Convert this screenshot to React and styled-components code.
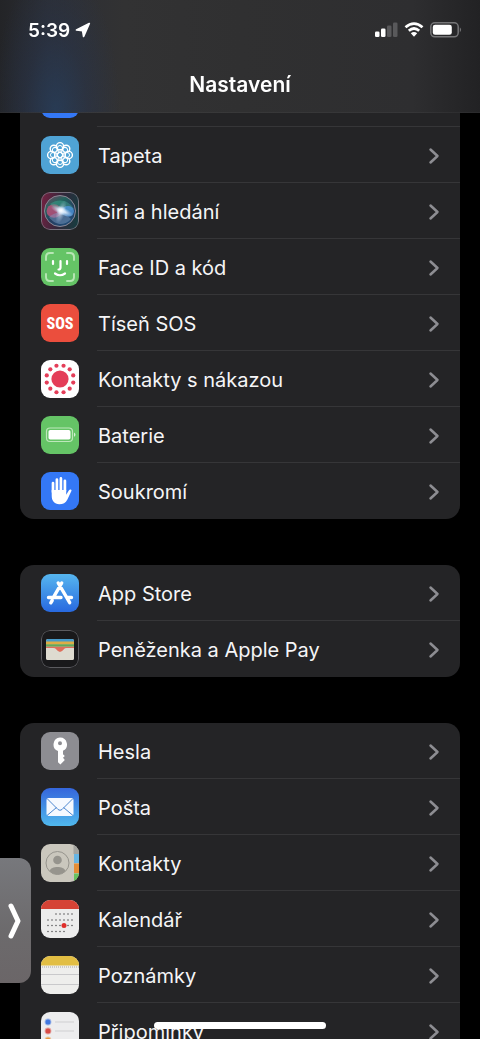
import styled, { createGlobalStyle } from "styled-components";

const GlobalStyle = createGlobalStyle`
  * {
    box-sizing: border-box;
  }
  body {
    margin: 0;
    background-color: #000;
    color: #f5f5f7;
    font-family: Inter, "Liberation Sans", sans-serif;
  }
`;

const Screen = styled.div`
  height: 100vh;
  overflow: hidden auto;
  scrollbar-width: none;
`;

const Header = styled.header`
  position: fixed;
  inset: 0 0 auto 0;
  z-index: 2;
  height: 113px;
  border-bottom: 1px solid rgba(255, 255, 255, 0.04);
  background: radial-gradient(
      ellipse 64px 150px at 56px 113px,
      rgba(38, 64, 98, 0.7),
      rgba(39, 54, 82, 0.4) 50%,
      transparent
    ),
    linear-gradient(
      to right,
      #232427,
      #2c2e34 10%,
      #323233 26%,
      #303031 50%,
      #2e2e30 86%,
      #222224
    );
`;

const StatusBar = styled.div`
  display: flex;
  align-items: center;
  justify-content: space-between;
  height: 60px;
  padding: 0 18px 0 28px;
  svg {
    display: block;
  }
`;

const Clock = styled.div`
  display: flex;
  align-items: center;
  gap: 5px;
  font-size: 19px;
  font-weight: 600;
  color: #fff;
`;

const Indicators = styled.div`
  display: flex;
  align-items: center;
  gap: 6px;
`;

const Title = styled.h1`
  margin: 0;
  height: 50px;
  line-height: 50px;
  text-align: center;
  font-size: 21px;
  font-weight: 600;
  color: #fff;
`;

const Groups = styled.main`
  display: flex;
  flex-direction: column;
  gap: 46px;
  padding: 71px 20px 0;
`;

const Group = styled.ul`
  margin: 0;
  padding: 0;
  list-style: none;
  border-radius: 14px;
  background-color: #242426;
  overflow: hidden;
`;

const Row = styled.a`
  display: flex;
  align-items: center;
  gap: 18px;
  height: 56px;
  padding-left: 21px;
  color: inherit;
  text-decoration: none;
`;

const AppIcon = styled.svg`
  flex: none;
  display: block;
  width: 38px;
  height: 38px;
  border-radius: 9px;
  background: ${({ $bg }) => $bg};
`;

const RowBody = styled.span`
  flex: 1;
  display: flex;
  align-items: center;
  justify-content: space-between;
  height: 56px;
  padding: 2px 20px 0 1px;
  border-bottom: 1px solid #363638;
  font-size: 20px;
  li:last-child & {
    border-color: transparent;
  }
`;

const Handle = styled.button`
  position: fixed;
  left: 0;
  top: 858px;
  z-index: 3;
  display: flex;
  align-items: center;
  justify-content: flex-end;
  width: 31px;
  height: 125px;
  padding: 0 8px 0 0;
  border: 0;
  border-radius: 0 12px 12px 0;
  background: linear-gradient(#77787c, #6c6a6c 60%, #6b6668);
`;

const HomeIndicator = styled.div`
  position: fixed;
  left: 50%;
  bottom: 10px;
  z-index: 3;
  width: 172px;
  height: 7px;
  transform: translateX(-50%);
  border-radius: 4px;
  background-color: #fff;
`;

const ring = (count, radius, start = 0) =>
  Array.from({ length: count }, (_, i) => {
    const angle = ((start + (360 / count) * i) * Math.PI) / 180;
    return [19 + radius * Math.cos(angle), 19 + radius * Math.sin(angle)];
  });

const icons = {
  display: { bg: "#3478f6", art: null },
  wallpaper: {
    bg: "#4fa3d5",
    art: (
      <g fill="none" stroke="#fff">
        {ring(8, 8.8).map(([x, y]) => (
          <circle key={`${x}-${y}`} cx={x} cy={y} r="3.6" strokeWidth="1.4" />
        ))}
        {[0, 45, 90, 135, 180, 225, 270, 315].map((a) => (
          <ellipse
            key={a}
            cx="19"
            cy="13"
            rx="2.7"
            ry="3.6"
            strokeWidth="1"
            transform={`rotate(${a} 19 19)`}
          />
        ))}
        <circle cx="19" cy="19" r="2.6" strokeWidth="1.2" />
      </g>
    ),
  },
  siri: {
    bg: "linear-gradient(100deg, #792142, #32273a 50%, #143f41)",
    art: (
      <>
        <defs>
          <radialGradient id="siriGlow">
            <stop offset="0" stopColor="#fff" />
            <stop offset="0.3" stopColor="#eef5ff" stopOpacity="0.85" />
            <stop offset="1" stopColor="#b9d8f2" stopOpacity="0" />
          </radialGradient>
          <linearGradient id="siriOrb" x1="0" y1="0" x2="0.6" y2="1">
            <stop offset="0" stopColor="#814264" />
            <stop offset="0.35" stopColor="#24635d" />
            <stop offset="0.7" stopColor="#253d60" />
            <stop offset="1" stopColor="#224b74" />
          </linearGradient>
        </defs>
        <circle cx="19" cy="19" r="15.5" fill="url(#siriOrb)" stroke="#8c8794" />
        <ellipse cx="13" cy="19" rx="7.5" ry="6.8" fill="#d6507f" opacity=".7" />
        <path d="M9 12C18 5 29 9 33 17C26 21 17 20 9 12Z" fill="#46b39a" opacity=".4" />
        <path d="M18 19C24 12 32 13 33 19C32 27 24 26 18 19Z" fill="#4f98e0" opacity=".75" />
        <path d="M8 25C14 20 21 18 30 27C24 34 14 34 8 25Z" fill="#7f9fc8" opacity=".45" />
        <ellipse cx="21" cy="19" rx="12" ry="4" fill="url(#siriGlow)" transform="rotate(22 21 19)" />
        <ellipse cx="20" cy="20" rx="4.5" ry="12" fill="url(#siriGlow)" opacity=".55" transform="rotate(18 20 20)" />
        <circle cx="20" cy="18.5" r="5" fill="url(#siriGlow)" />
        <rect x=".5" y=".5" width="37" height="37" rx="8.5" fill="none" stroke="#77717d" />
      </>
    ),
  },
  face: {
    bg: "#65c466",
    art: (
      <g fill="none" strokeLinecap="round" stroke="#fff" strokeWidth="2.2">
        <g stroke="#b8e6b5" strokeWidth="1.9">
          <path d="M5 12V9Q5 5 9 5H12M26 5h3q4 0 4 4v3M33 26v3q0 4-4 4h-3M12 33H9q-4 0-4-4v-3" />
        </g>
        <path d="M12 13v3M26 13v3M19.5 13v6.5q0 2-2 2M14 25.5q5 3.5 10 0" />
      </g>
    ),
  },
  sos: {
    bg: "#eb4e3d",
    art: (
      <text
        x="19"
        y="25"
        textAnchor="middle"
        fill="#fff"
        fontFamily="'Roboto Condensed', 'Open Sans Condensed', Roboto, sans-serif"
        fontSize="16"
        fontWeight="800"
      >
        SOS
      </text>
    ),
  },
  exposure: {
    bg: "#fff",
    art: (
      <g fill="#e43d58">
        <circle cx="19" cy="19" r="8.6" />
        {ring(12, 13.7, 15).map(([x, y]) => (
          <circle key={`${x}-${y}`} cx={x} cy={y} r="2.1" />
        ))}
      </g>
    ),
  },
  battery: {
    bg: "#65c466",
    art: (
      <>
        <rect x="5.5" y="12" width="26" height="13.5" rx="3.5" fill="none" stroke="#bee7bb" strokeWidth="1.2" />
        <rect x="7.5" y="14" width="22" height="9.5" rx="1.8" fill="#fff" />
        <path d="M33 16.5q3 2.2 0 4.5z" fill="#d6f0d4" />
      </>
    ),
  },
  privacy: {
    bg: "#3478f6",
    art: (
      <>
        <path
          d="M12 20V11M15.9 18V7.5M19.9 18V6.4M23.9 19V8.8"
          stroke="#fff"
          strokeWidth="2.7"
          strokeLinecap="round"
        />
        <path
          d="M10.7 18H25.2v4.8l2.6-4.4c1-1.5 3.3-1.1 2.6.7l-4 8.4C24.7 31 22 32.2 18.3 32.2c-5 0-7.6-3.3-7.6-8.7z"
          fill="#fff"
        />
      </>
    ),
  },
  store: {
    bg: "linear-gradient(#56b6ef, #2869df)",
    art: (
      <g stroke="#fff" strokeWidth="3.4" strokeLinecap="round">
        <path d="M20.7 9L13 22.3M17.2 9L28.7 28.7M7.5 23.5H20M27 23.5H30.5M11.2 26.5L9.8 28.8" />
      </g>
    ),
  },
  wallet: {
    bg: "#19191b",
    art: (
      <>
        <rect x="5" y="9" width="28" height="21" rx="2" fill="#dedbd0" />
        <path d="M5 12v-1q0-2 2-2h24q2 0 2 2v1z" fill="#479bc9" />
        <path d="M5 11.5h28v3H5z" fill="#dfad45" />
        <path d="M5 14.2h28v2.6H5z" fill="#65a857" />
        <path d="M5 16.7h28v1.6h-8q-2 0-3 2-3 3.5-6 0-1-2-3-2H5z" fill="#df6e5b" />
        <path d="M5 18h7q2 0 3 1.8 4 4.5 8 0 1-1.8 3-1.8h7v10q0 2-2 2H7q-2 0-2-2z" fill="#dedbd0" />
        <rect x=".5" y=".5" width="37" height="37" rx="8.5" fill="none" stroke="#5b5b5f" />
      </>
    ),
  },
  key: {
    bg: "#8d8d92",
    art: (
      <path
        fill="#fff"
        fillRule="evenodd"
        d="M19 5.5a7 7 0 0 1 3 13.3v3.4l1.8 1.7-1.8 1.8 1.8 2.3-4.4 4.5-2.4-2.3V19A7 7 0 0 1 19 5.5zm0 3.7a2 2 0 1 0 0 4 2 2 0 0 0 0-4z"
      />
    ),
  },
  mail: {
    bg: "linear-gradient(#3566dc, #50b8ec)",
    art: (
      <>
        <rect x="5.5" y="10" width="27" height="18" rx="2" fill="#f5f9ff" />
        <path
          d="M6 10.5l11 11q2 1.7 4 0l11-11M6 27.5l9.5-8M32 27.5l-9.5-8"
          fill="none"
          stroke="#4c87cf"
          strokeWidth="1"
        />
      </>
    ),
  },
  contacts: {
    bg: "#cac7bd",
    art: (
      <>
        <path d="M32.5 0H38V10H32.5z" fill="#a4a49f" />
        <path d="M33 10h5v9h-5z" fill="#66b5e4" />
        <path d="M33 19.5h5V29h-5z" fill="#e58d35" />
        <path d="M33 29.5h5V38h-5z" fill="#67c35f" />
        <circle cx="16.5" cy="19" r="11.5" fill="none" stroke="#96948d" />
        <circle cx="16.5" cy="16" r="4.3" fill="#96948d" />
        <path d="M8.5 27c1.5-5.5 14.5-5.5 16 0-4 4.5-12 4.5-16 0z" fill="#96948d" />
      </>
    ),
  },
  calendar: {
    bg: "#ececec",
    art: (
      <>
        <path d="M0 0h38v9H0z" fill="#d54336" />
        <g stroke="#4d4d4f" strokeWidth="1.5" strokeLinecap="round" strokeDasharray="0 4">
          <path d="M15 14H31.5M7 20H31.5M7 25.5H31.5M7 31.5H23.5" />
        </g>
        <circle cx="23" cy="25.5" r="2.5" fill="#df2e2b" />
      </>
    ),
  },
  notes: {
    bg: "#eeeeec",
    art: (
      <>
        <path d="M0 0h38v9.5H0z" fill="#e2be43" />
        <path d="M1 11H38" stroke="#aaa89f" strokeDasharray="1 1" />
        <path d="M0 18.5H38M0 28.5H38" stroke="#c9c9cb" />
      </>
    ),
  },
  reminders: {
    bg: "#ededee",
    art: (
      <>
        {[
          ["#4277df", 10],
          ["#d94b45", 19],
          ["#e9973f", 28],
        ].map(([color, y]) => (
          <g key={y}>
            <circle cx="7" cy={y} r="2.5" fill={color} stroke={color} strokeOpacity=".45" strokeWidth="1.8" />
            <path d={`M14 ${y}H33`} stroke="#cfcfd1" />
          </g>
        ))}
      </>
    ),
  },
};

const groups = [
  [
    { id: "zobrazeni", icon: "display", title: "" },
    { id: "tapeta", icon: "wallpaper", title: "Tapeta" },
    { id: "siri", icon: "siri", title: "Siri a hledání" },
    { id: "face-id", icon: "face", title: "Face ID a kód" },
    { id: "sos", icon: "sos", title: "Tíseň SOS" },
    { id: "nakaza", icon: "exposure", title: "Kontakty s nákazou" },
    { id: "baterie", icon: "battery", title: "Baterie" },
    { id: "soukromi", icon: "privacy", title: "Soukromí" },
  ],
  [
    { id: "app-store", icon: "store", title: "App Store" },
    { id: "penezenka", icon: "wallet", title: "Peněženka a Apple Pay" },
  ],
  [
    { id: "hesla", icon: "key", title: "Hesla" },
    { id: "posta", icon: "mail", title: "Pošta" },
    { id: "kontakty", icon: "contacts", title: "Kontakty" },
    { id: "kalendar", icon: "calendar", title: "Kalendář" },
    { id: "poznamky", icon: "notes", title: "Poznámky" },
    { id: "pripominky", icon: "reminders", title: "Připomínky" },
  ],
];

const Chevron = () => (
  <svg width="12" height="18" viewBox="0 0 12 18" fill="none" aria-hidden="true">
    <path
      d="M2.5 2.5L9.5 9L2.5 15.5"
      stroke="#8d8d92"
      strokeWidth="2.5"
      strokeLinecap="round"
      strokeLinejoin="round"
    />
  </svg>
);

const SettingsRow = ({ item }) => {
  const { bg, art } = icons[item.icon];
  return (
    <li>
      <Row href={`#${item.id}`}>
        <AppIcon $bg={bg} viewBox="0 0 38 38" aria-hidden="true">
          {art}
        </AppIcon>
        <RowBody>
          <span>{item.title}</span>
          <Chevron />
        </RowBody>
      </Row>
    </li>
  );
};

const App = () => {
  return (
    <>
      <GlobalStyle />
      <Screen>
        <Header>
          <StatusBar>
            <Clock>
              <span>5:39</span>
              <svg width="16" height="16" viewBox="0 0 16 16" aria-hidden="true">
                <path
                  d="M14.3 1.5L1.5 8L7.6 8.7L8.6 14.5Z"
                  fill="#fff"
                  stroke="#fff"
                  strokeWidth="1.7"
                  strokeLinejoin="round"
                />
              </svg>
            </Clock>
            <Indicators>
              <svg width="23" height="16" viewBox="0 0 23 16" aria-hidden="true">
                <g fill="#fff">
                  <rect x="0" y="9.5" width="4.5" height="5.5" rx="1.3" />
                  <rect x="6" y="6.5" width="4.5" height="8.5" rx="1.3" />
                </g>
                <g fill="#59595b">
                  <rect x="12" y="3.5" width="4.5" height="11.5" rx="1.3" />
                  <rect x="18" y="0.5" width="4.5" height="14.5" rx="1.3" />
                </g>
              </svg>
              <svg width="20" height="16" viewBox="0 0 20 16" fill="none" aria-hidden="true">
                <path
                  d="M1.5 5.3Q10-2.2 18.5 5.3M4.8 8.8Q10 4.2 15.2 8.8"
                  stroke="#fff"
                  strokeWidth="2.7"
                />
                <path d="M6.8 11.3Q10 8.7 13.2 11.3L10 14.8z" fill="#fff" />
              </svg>
              <svg width="32" height="16" viewBox="0 0 32 16" aria-hidden="true">
                <rect x=".8" y=".8" width="27.4" height="14" rx="4" fill="none" stroke="#757577" strokeWidth="1.5" />
                <rect x="2.8" y="2.8" width="19" height="10" rx="2.3" fill="#fff" />
                <path d="M29.8 5.3q2.6 2.5 0 5z" fill="#757577" />
              </svg>
            </Indicators>
          </StatusBar>
          <Title>Nastavení</Title>
        </Header>
        <Groups>
          {groups.map((group) => (
            <Group key={group[0].id}>
              {group.map((item) => (
                <SettingsRow key={item.id} item={item} />
              ))}
            </Group>
          ))}
        </Groups>
        <Handle type="button" aria-label="Zobrazit panel">
          <svg width="16" height="36" viewBox="0 0 16 36" fill="none" aria-hidden="true">
            <path
              d="M4 3L11 18L4 33"
              stroke="#fff"
              strokeWidth="5"
              strokeLinecap="round"
              strokeLinejoin="round"
            />
          </svg>
        </Handle>
        <HomeIndicator />
      </Screen>
    </>
  );
};

export default App;
